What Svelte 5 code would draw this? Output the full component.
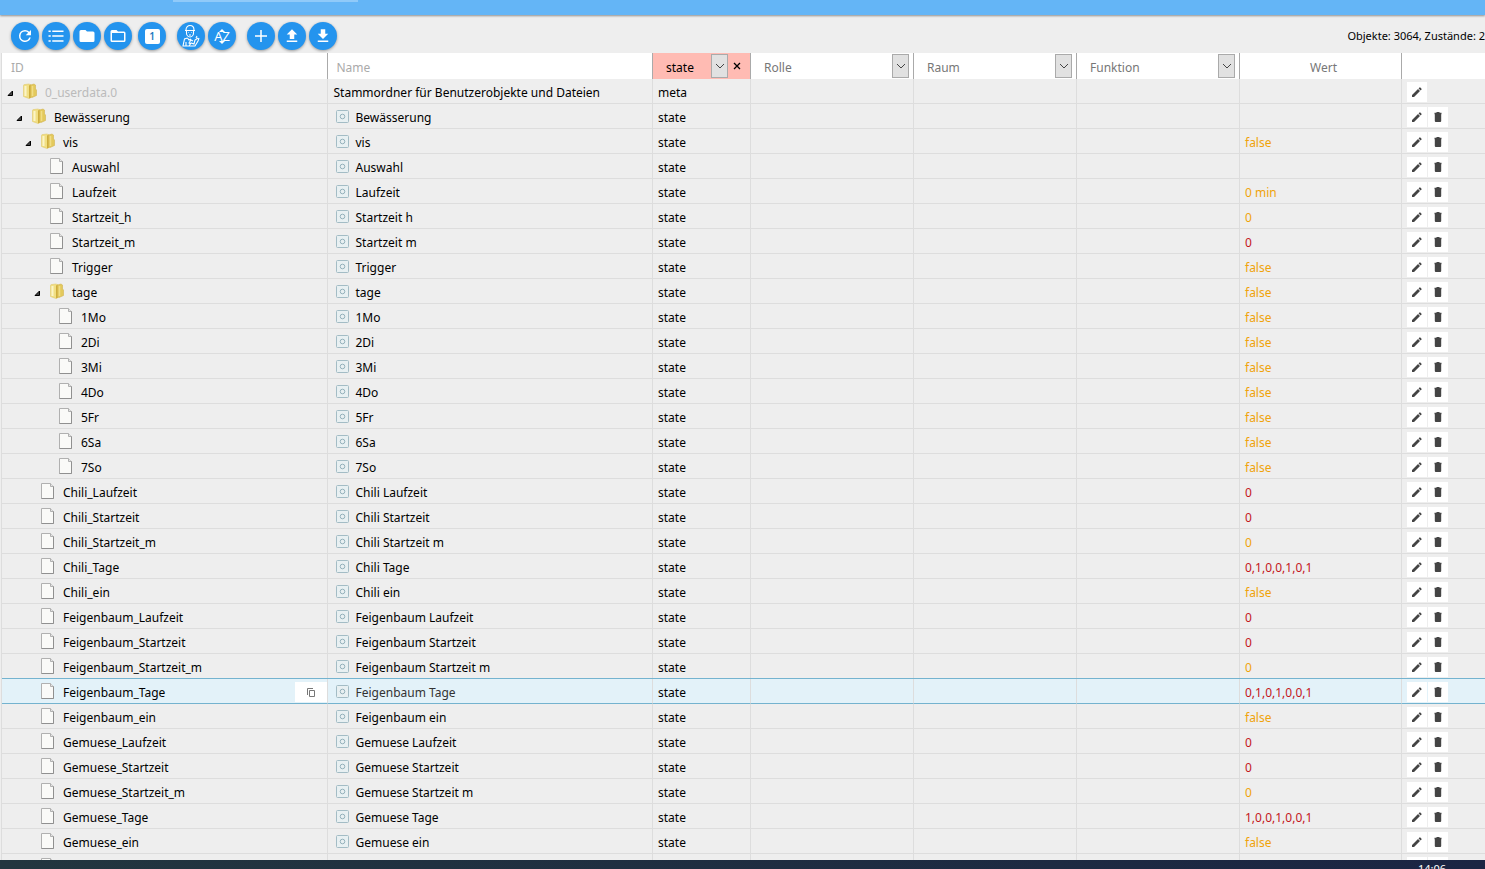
<script lang="ts">
  type Row = {
    id: string;
    level: number;
    name?: string;
    folder?: boolean;
    type?: string;
    value?: string;
    ack?: boolean;
  };

  const schedule = (prefix: string, days: string): Row[] => [
    { id: `${prefix}_Laufzeit`, level: 2, value: "0", ack: false },
    { id: `${prefix}_Startzeit`, level: 2, value: "0", ack: false },
    { id: `${prefix}_Startzeit_m`, level: 2, value: "0" },
    { id: `${prefix}_Tage`, level: 2, value: days, ack: false },
    { id: `${prefix}_ein`, level: 2, value: "false" },
  ];

  const days = ["1Mo", "2Di", "3Mi", "4Do", "5Fr", "6Sa", "7So"];

  const rows: Row[] = [
    {
      id: "0_userdata.0",
      level: 0,
      name: "Stammordner für Benutzerobjekte und Dateien",
      folder: true,
      type: "meta",
    },
    { id: "Bewässerung", level: 1, folder: true },
    { id: "vis", level: 2, folder: true, value: "false" },
    { id: "Auswahl", level: 3 },
    { id: "Laufzeit", level: 3, value: "0 min" },
    { id: "Startzeit_h", level: 3, value: "0" },
    { id: "Startzeit_m", level: 3, value: "0", ack: false },
    { id: "Trigger", level: 3, value: "false" },
    { id: "tage", level: 3, folder: true, value: "false" },
    ...days.map((id) => ({ id, level: 4, value: "false" })),
    ...schedule("Chili", "0,1,0,0,1,0,1"),
    ...schedule("Feigenbaum", "0,1,0,1,0,0,1"),
    ...schedule("Gemuese", "1,0,0,1,0,0,1"),
    { id: "", level: 2, type: "" },
  ];

  const tools = [
    { icon: "refresh", label: "Aktualisieren" },
    { icon: "list", label: "Listenansicht" },
    { icon: "folder", label: "Alle zuklappen" },
    { icon: "folderOpen", label: "Alle aufklappen" },
    { icon: "one", label: "Eine Ebene aufklappen", gap: "small" },
    { icon: "expert", label: "Expertenmodus", gap: "large" },
    { icon: "sort", label: "Alphabetisch sortieren" },
    { icon: "add", label: "Objekt hinzufügen", gap: "large" },
    { icon: "upload", label: "Hochladen" },
    { icon: "download", label: "Herunterladen" },
  ];

  const paths: Record<string, string> = {
    refresh:
      "M17.65 6.35A7.96 7.96 0 0 0 12 4a8 8 0 1 0 7.73 10h-2.08A6 6 0 1 1 12 6c1.66 0 3.14.69 4.22 1.78L13 11h7V4z",
    list: "M2 4.500h3v2H2zM7 4.500h15v2H7zM2 11h3v2H2zM7 11h15v2H7zM2 17.500h3v2H2zM7 17.500h15v2H7z",
    folder:
      "M10 4H4a2 2 0 0 0-2 2v12a2 2 0 0 0 2 2h16a2 2 0 0 0 2-2V8a2 2 0 0 0-2-2h-8z",
    folderOpen:
      "M20 6h-8l-2-2H4a2 2 0 0 0-2 2v12a2 2 0 0 0 2 2h16a2 2 0 0 0 2-2V8a2 2 0 0 0-2-2zm0 12H4V8h16z",
    add: "M20 13h-7v7h-2v-7H4v-2h7V4h2v7h7z",
    upload: "M9 16h6v-6h4l-7-7-7 7h4zM5 18h14v2H5z",
    download: "M19 9h-4V3H9v6H5l7 7 7-7zM5 18h14v2H5z",
  };

  let typeFilter = $state("state");
  let selected = $state("Feigenbaum_Tage");

  const nameOf = (row: Row) => row.name ?? row.id.replace(/_/g, " ");
</script>

{#snippet arrow()}
  <span class="drop">
    <svg width="10" height="6" viewBox="0 0 10 6">
      <path d="M1 1l4 4 4-4" fill="none" stroke="#444" />
    </svg>
  </span>
{/snippet}

{#snippet filter(label: string)}
  <label class="filter">
    <select aria-label={label}>
      <option>{label}</option>
    </select>
    {@render arrow()}
  </label>
{/snippet}

<div class="page">
  <header class="topbar"><div class="tab"></div></header>

  <div class="toolbar">
    {#each tools as tool}
      <button class="tool {tool.gap ?? ''}" aria-label={tool.label}>
        {#if tool.icon === "one"}
          <span class="one">1</span>
        {:else if tool.icon === "expert"}
          <svg class="expert" viewBox="0 0 20 24" fill="none" stroke="#fff" stroke-width="1.100">
            <path d="M5 6c0-3 2-4.500 4-4.500S13 3 13 6M4 6.500h10M5.500 7v2c0 2 1.500 4 3.500 4s3.500-2 3.500-4V7M7.500 8.500h.5M10 8.500h.5M8 11h2" />
            <path d="M6.500 14L3.500 15 2 22h3M6.500 14L8 16l2-1M5 18v4h5M8 22l2-3 3 1 1-4 3-2M15 14l1-2M18 14l-1 3-3 5h-4M12 17l-2-1-2 3 2 1" />
          </svg>
        {:else if tool.icon === "sort"}
          <span class="sort">
            <svg width="8" height="3" viewBox="0 0 8 3"><path d="M4 0l3 3H1z" fill="#fff" /></svg>
            <span>AZ</span>
            <svg width="8" height="3" viewBox="0 0 8 3"><path d="M4 3l3-3H1z" fill="#fff" /></svg>
          </span>
        {:else}
          <svg width="18" height="18" viewBox="0 0 24 24" fill="#fff">
            <path d={paths[tool.icon]} />
          </svg>
        {/if}
      </button>
    {/each}
    <div class="stats">Objekte: 3064, Zustände: 2</div>
  </div>

  <main>
    <table>
      <colgroup>
        <col />
        <col />
        <col class="col-type" />
        <col class="col-filter" />
        <col class="col-filter" />
        <col class="col-filter" />
        <col class="col-value" />
        <col class="col-actions" />
      </colgroup>
      <thead>
        <tr>
          <th><input placeholder="ID" aria-label="ID" /></th>
          <th><input placeholder="Name" aria-label="Name" /></th>
          <th class:active={typeFilter}>
            <div class="type-filter">
              <label class="filter">
                <select bind:value={typeFilter} aria-label="Typ">
                  <option value="">Typ</option>
                  <option>state</option>
                  <option>meta</option>
                </select>
                {@render arrow()}
              </label>
              <button class="clear" aria-label="Filter löschen" onclick={() => (typeFilter = "")}>
                <svg width="8" height="8" viewBox="0 0 8 8">
                  <path d="M1 1l6 6M7 1L1 7" stroke="#000" stroke-width="1.300" />
                </svg>
              </button>
            </div>
          </th>
          <th>{@render filter("Rolle")}</th>
          <th>{@render filter("Raum")}</th>
          <th>{@render filter("Funktion")}</th>
          <th class="center">Wert</th>
          <th></th>
        </tr>
      </thead>
      <tbody>
        {#each rows as row}
          <tr class:selected={row.id === selected} onclick={() => (selected = row.id)}>
            <td>
              <div class="cell tree" style="padding-left: {5 + row.level * 9}px">
                <span class="expander">
                  {#if row.folder}
                    <svg width="7" height="7" viewBox="0 0 7 7">
                      <path d="M5.500 1v4.500H1z" fill="#444" stroke="#000" />
                    </svg>
                  {/if}
                </span>
                {#if row.folder}
                  <svg class="icon" width="14" height="16" viewBox="0 0 14 16">
                    <path d="M.5 2.500Q.5 1.500 2 1.500L6 1l2 1v12.500L6 15.500.5 13.500z" fill="#f1df84" stroke="#e0ca6c" stroke-width=".6" />
                    <path d="M6 2.500L8 1.500v13l-2 1z" fill="#cfae3c" />
                    <path d="M7.500 2L11 1l1.500 1v4l1 1v5.500L9 14.500l-1.500-.5z" fill="#e3c95c" stroke="#d2b350" stroke-width=".6" />
                    <path d="M2.500 3v10" stroke="#fbf4c8" stroke-width="2" />
                    <path d="M9.500 3v10" stroke="#f0dd86" stroke-width="1.500" />
                  </svg>
                {:else}
                  <svg class="icon" width="14" height="16" viewBox="0 0 14 16">
                    <path d="M.5.5h9l3 3v12H.5z" fill="#fafaf8" stroke="#b0b0b0" />
                    <path d="M9.500.5v3h3" fill="#e4e4e4" stroke="#b0b0b0" />
                    <path d="M.5 15.500h12v-12" fill="none" stroke="#909090" />
                  </svg>
                {/if}
                <span class="label" class:muted={row.level === 0}>{row.id}</span>
                {#if row.id && row.id === selected}
                  <button class="copy" aria-label="ID kopieren">
                    <svg width="10" height="11" viewBox="0 0 10 11" fill="none" stroke="#777">
                      <path d="M1.500 8V1.500H7" />
                      <path d="M3.500 3.500h5v6h-5z" />
                    </svg>
                  </button>
                {/if}
              </div>
            </td>
            <td>
              <div class="cell name">
                {#if row.level > 0}
                  <svg class="state-icon" width="13" height="13" viewBox="0 0 13 13" fill="none">
                    <rect x=".5" y=".5" width="12" height="12" rx="1" fill="#e8f0f2" stroke="#a3bcc5" />
                    <circle cx="6.500" cy="6.500" r="2.300" stroke="#94b1bb" />
                  </svg>
                {/if}
                <span>{nameOf(row)}</span>
              </div>
            </td>
            <td><div class="cell">{row.type ?? "state"}</div></td>
            <td></td>
            <td></td>
            <td></td>
            <td>
              <div class="cell value" class:unconfirmed={row.ack === false}>{row.value ?? ""}</div>
            </td>
            <td>
              <div class="cell actions">
                <button aria-label="Bearbeiten">
                  <svg width="10" height="10" viewBox="0 0 10 10" fill="#444">
                    <path d="M0 10V8L6 2l2 2-6 6zM6.600 1.400L7.500.5q.4-.4.8 0l1.200 1.200q.4.4 0 .8l-.9.9z" />
                  </svg>
                </button>
                {#if row.level > 0}
                  <button aria-label="Löschen">
                    <svg width="8" height="10" viewBox="0 0 8 10" fill="#444">
                      <path d="M.5.8H2.500V0h3v.8h2v1.400h-7zM.8 2.200h6.400V9q0 1-1 1H1.800q-1 0-1-1z" />
                    </svg>
                  </button>
                {/if}
              </div>
            </td>
          </tr>
        {/each}
      </tbody>
    </table>
  </main>

  <footer><time>14:06</time></footer>
</div>

<style>
  :global(body) {
    margin: 0;
  }

  .page {
    height: 100vh;
    display: flex;
    flex-direction: column;
    overflow: hidden;
    background: #eee;
    color: #000;
    font: 12px/16px "Noto Sans", "Open Sans", sans-serif;
  }

  button,
  input,
  select {
    margin: 0;
    padding: 0;
    border: 0;
    border-radius: 0;
    font: inherit;
    color: inherit;
    background: none;
  }

  button,
  select {
    cursor: pointer;
  }

  .topbar {
    flex: none;
    height: 15px;
    background: #64b5f6;
    box-shadow: 0 1px 2px rgba(0, 0, 0, 0.4);
    z-index: 1;
  }

  .tab {
    width: 185px;
    height: 2px;
    margin-left: 173px;
    background: #90caf9;
  }

  .toolbar {
    flex: none;
    height: 38px;
    box-sizing: border-box;
    display: flex;
    align-items: center;
    gap: 3px;
    padding: 4px 0 0 11px;
  }

  .tool {
    flex: none;
    width: 28px;
    height: 28px;
    display: flex;
    align-items: center;
    justify-content: center;
    border-radius: 50%;
    background: #2494ee;
    color: #fff;
    box-shadow: 0 1px 3px rgba(0, 0, 0, 0.35);
  }

  .tool.small {
    margin-left: 3px;
  }

  .tool.large {
    margin-left: 8px;
  }

  .one {
    width: 15px;
    height: 15px;
    border-radius: 2px;
    background: #fff;
    color: #2478c0;
    font-size: 10px;
    line-height: 15px;
    font-weight: 600;
  }

  .expert {
    width: 20px;
    height: 24px;
  }

  .sort {
    display: flex;
    flex-direction: column;
    align-items: center;
    font-size: 13px;
    line-height: 9px;
  }

  .stats {
    margin-left: auto;
    font-size: 11px;
    white-space: nowrap;
  }

  main {
    flex: 1;
    min-height: 0;
    overflow: hidden;
    padding-left: 1px;
  }

  table {
    width: 100%;
    table-layout: fixed;
    border-spacing: 0;
    border-left: 1px solid #ddd;
  }

  .col-type {
    width: 98px;
  }

  .col-filter {
    width: 163px;
  }

  .col-value {
    width: 162px;
  }

  .col-actions {
    width: 83px;
  }

  th {
    height: 26px;
    padding: 0;
    background: #fff;
    border-right: 1px solid #aaa;
    color: #777;
    font-weight: 400;
    text-align: left;
  }

  th.active {
    background: #ffbbb3;
    color: #000;
  }

  th.center {
    height: 23px;
    padding: 3px 0 0 6px;
    text-align: center;
  }

  th:last-child,
  td:last-child {
    border-right: 0;
  }

  th input {
    display: block;
    width: 100%;
    height: 26px;
    box-sizing: border-box;
    padding: 3px 9px 0;
  }

  th input::placeholder {
    color: #aaa;
    opacity: 1;
  }

  .filter {
    flex: 1;
    display: grid;
    align-items: center;
    padding-right: 4px;
  }

  .filter select {
    grid-area: 1 / 1;
    appearance: none;
    height: 26px;
    padding: 3px 20px 0 13px;
  }

  .drop {
    grid-area: 1 / 1;
    justify-self: end;
    box-sizing: border-box;
    width: 17px;
    height: 24px;
    display: flex;
    align-items: center;
    justify-content: center;
    border: 1px solid #aaa;
    background: #e1e1e1;
    pointer-events: none;
  }

  .type-filter {
    display: flex;
    align-items: center;
  }

  .clear {
    width: 18px;
    height: 24px;
    margin-right: 4px;
    display: flex;
    align-items: center;
    justify-content: center;
  }

  .type-filter .filter {
    padding-right: 0;
  }

  td {
    height: 24px;
    padding: 0;
    border-right: 1px solid #ddd;
    border-bottom: 1px solid #ddd;
  }

  .cell {
    height: 24px;
    box-sizing: border-box;
    display: flex;
    align-items: center;
    padding: 4px 0 0 5px;
    overflow: hidden;
    white-space: nowrap;
  }

  .expander {
    width: 16px;
    display: flex;
    flex: none;
  }

  .icon {
    flex: none;
    margin: 0 8px 4px 0;
  }

  .label {
    flex: 1;
  }

  .muted {
    color: #bbb;
  }

  .copy {
    width: 32px;
    height: 20px;
    margin-bottom: 2px;
    display: flex;
    align-items: center;
    justify-content: center;
    background: #fff;
  }

  .name {
    padding-left: 6px;
  }

  .state-icon {
    flex: none;
    margin: 0 7px 4px 2px;
  }

  .value {
    color: #f0a30a;
  }

  .value.unconfirmed {
    color: #c4161c;
  }

  .actions {
    gap: 1px;
    padding-top: 2px;
  }

  .actions button {
    width: 20px;
    height: 20px;
    display: flex;
    align-items: center;
    justify-content: center;
    background: #fff;
  }

  .selected td {
    background: #e3f2f9;
    border-bottom-color: #74b3cf;
    box-shadow: 0 -1px #74b3cf;
  }

  .selected .name {
    color: #333;
  }

  footer {
    flex: none;
    height: 9px;
    display: flex;
    justify-content: flex-end;
    padding-right: 39px;
    overflow: hidden;
    background: linear-gradient(90deg, #22363f, #1b2543);
    color: #fff;
    font-size: 11px;
    line-height: 18px;
  }
</style>
